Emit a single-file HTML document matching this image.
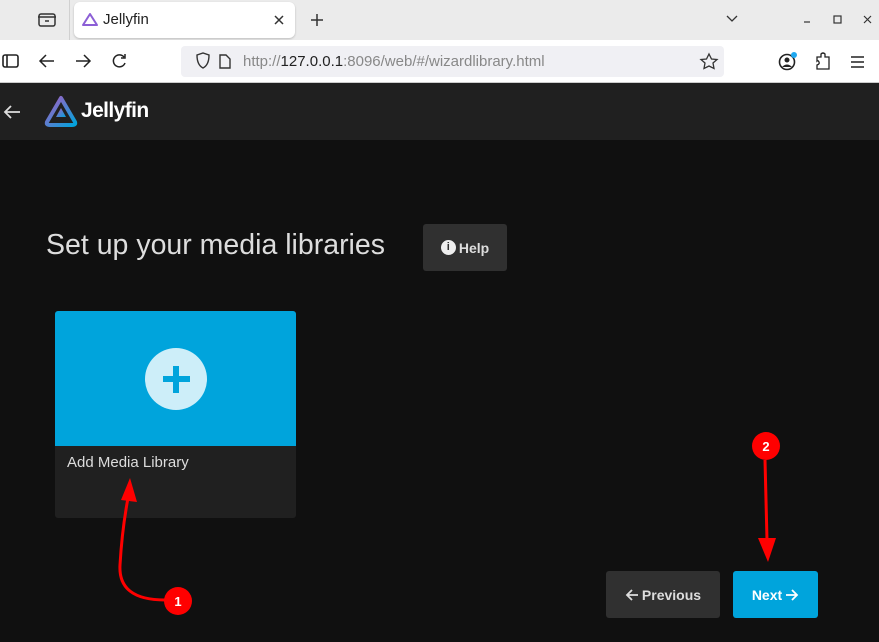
<!DOCTYPE html>
<html><head><style>
*{margin:0;padding:0;box-sizing:border-box}
body{width:879px;height:642px;overflow:hidden;background:#101010;font-family:"Liberation Sans",sans-serif;position:relative}
.abs{position:absolute}
.btn{display:flex;align-items:center;justify-content:center;gap:3px}
</style></head><body>
<div class="abs" style="left:0;top:0;width:879px;height:40px;background:#ebebeb"></div>
<div class="abs" style="left:69px;top:0;width:1px;height:40px;background:#d0d0d0"></div>
<div class="abs" style="left:74px;top:2px;width:221px;height:36px;background:#fff;border-radius:6px;box-shadow:0 1px 2px rgba(0,0,0,.2)"></div>
<svg class="abs" style="left:0;top:0" width="879" height="84">
<rect x="39" y="14" width="16" height="12" rx="2" fill="none" stroke="#333" stroke-width="1.5"/><line x1="38" y1="17" x2="56" y2="17" stroke="#333" stroke-width="1.5"/><line x1="45" y1="21" x2="49" y2="21" stroke="#333" stroke-width="1.5"/>
<path d="M90 14 L97 25 L83 25 Z" fill="none" stroke="#8c5fd6" stroke-width="2" stroke-linejoin="round"/>
<path d="M275 16 L283 24 M283 16 L275 24" stroke="#333" stroke-width="1.5"/>
<path d="M317 14 V26 M311 20 H323" stroke="#333" stroke-width="1.5"/>
<path d="M727 16 L732 21 L737 16" fill="none" stroke="#333" stroke-width="1.3"/>
<line x1="804" y1="22" x2="810" y2="22" stroke="#333" stroke-width="1.2"/>
<rect x="834" y="16" width="7" height="7" fill="none" stroke="#333" stroke-width="1.2"/>
<path d="M864 16 L871 23 M871 16 L864 23" stroke="#333" stroke-width="1.2"/>
<rect x="0" y="40" width="879" height="42" fill="#fff"/>
<rect x="3" y="55" width="15" height="12" rx="2" fill="none" stroke="#222" stroke-width="1.6"/><line x1="7" y1="55" x2="7" y2="67" stroke="#222" stroke-width="1.6"/>
<path d="M54 61 H40 M46 55 L40 61 L46 67" fill="none" stroke="#222" stroke-width="1.5"/>
<path d="M76 61 H90 M84 55 L90 61 L84 67" fill="none" stroke="#222" stroke-width="1.5"/>
<path d="M124 57 A6 6 0 1 0 125 63 M125 54 V58 H121" fill="none" stroke="#222" stroke-width="1.5"/>
<rect x="181" y="46" width="543" height="31" rx="4" fill="#f0f0f4"/>
<path d="M197 55 L203 53 L209 55 Q209 65 203 68 Q197 65 197 55Z" fill="none" stroke="#333" stroke-width="1.4"/>
<path d="M220 55 H226 L230 59 V68 H220Z" fill="none" stroke="#333" stroke-width="1.4"/>
<path d="M709 54 L711.5 59 L717 59.5 L713 63 L714 68.5 L709 66 L704 68.5 L705 63 L701 59.5 L706.5 59Z" fill="none" stroke="#333" stroke-width="1.3"/>
<circle cx="787" cy="62" r="7.5" fill="none" stroke="#222" stroke-width="1.6"/><circle cx="787" cy="60" r="2.5" fill="#222"/><path d="M782 67 Q787 62 792 67" fill="#222"/><circle cx="794" cy="55" r="3" fill="#1fa8f0"/>
<path d="M817 57 H821 V54 Q823 52 825 54 V57 H829 V69 H817 V65 Q820 64 819 62 Q818 60 817 61Z" fill="none" stroke="#222" stroke-width="1.3"/>
<path d="M851 57 H864 M851 62 H864 M851 67 H864" stroke="#222" stroke-width="1.4"/>
<rect x="0" y="82" width="879" height="1" fill="#ccc"/>
</svg>
<div class="abs" style="left:103px;top:11px;font-size:15px;color:#222">Jellyfin</div>
<div class="abs" style="left:243px;top:53px;font-size:15px;color:#888">http://<span style="color:#222">127.0.0.1</span>:8096/web/#/wizardlibrary.html</div>
<div class="abs" style="left:0;top:83px;width:879px;height:57px;background:#202020"></div>
<svg class="abs" style="left:0;top:83px" width="200" height="57">
<path d="M20 29 H5 M11 23 L5 29 L11 35" fill="none" stroke="#ddd" stroke-width="1.8"/>
<defs><linearGradient id="g" x1="0" y1="0" x2="1" y2="1"><stop offset="0" stop-color="#aa5cc3"/><stop offset="1" stop-color="#00a4dc"/></linearGradient></defs>
<path d="M61 15 L75 39 Q76 42 72 42 H50 Q46 42 47 39Z" fill="none" stroke="url(#g)" stroke-width="4" stroke-linejoin="round"/>
<path d="M61 25 L66 34 H56Z" fill="url(#g)"/>
</svg>
<div class="abs" style="left:81px;top:99px;font-size:21px;font-weight:bold;color:#fff;letter-spacing:-0.6px">Jellyfin</div>
<div class="abs" style="left:46px;top:229px;font-size:28.5px;color:#ddd">Set up your media libraries</div>
<div class="abs btn" style="left:423px;top:224px;width:84px;height:47px;background:#303030;border-radius:3px;color:#ddd;font-size:14px;font-weight:bold"><span style="display:inline-block;width:15px;height:15px;border-radius:50%;background:#eee;color:#303030;font-size:11px;text-align:center;line-height:15px">i</span>Help</div>
<div class="abs" style="left:55px;top:311px;width:241px;height:207px;background:#202020;border-radius:3px;overflow:hidden">
<div style="height:135px;background:#00a4dc"></div>
<div style="position:absolute;left:90px;top:37px;width:62px;height:62px;border-radius:50%;background:#cdeef9"></div>
<div style="position:absolute;left:108px;top:65px;width:27px;height:6px;background:#00a4dc"></div>
<div style="position:absolute;left:118px;top:55px;width:6px;height:27px;background:#00a4dc"></div>
<div style="position:absolute;left:12px;top:143px;font-size:15px;color:#ddd">Add Media Library</div>
</div>
<div class="abs btn" style="left:606px;top:571px;width:114px;height:47px;background:#303030;border-radius:3px;color:#ddd;font-size:14px;font-weight:bold"><svg width="14" height="14"><path d="M13 7 H2 M7 2 L2 7 L7 12" fill="none" stroke="#ddd" stroke-width="1.8"/></svg>Previous</div>
<div class="abs btn" style="left:733px;top:571px;width:85px;height:47px;background:#00a4dc;border-radius:3px;color:#fff;font-size:14px;font-weight:bold">Next<svg width="14" height="14"><path d="M1 7 H12 M7 2 L12 7 L7 12" fill="none" stroke="#fff" stroke-width="1.8"/></svg></div>
<svg class="abs" style="left:0;top:0" width="879" height="642">
<path d="M165 600 Q118 600 120 565 Q122 530 128 498" fill="none" stroke="#f00" stroke-width="3"/>
<path d="M130 478 L137 502 L121 500Z" fill="#f00"/>
<path d="M765 460 L767 540" stroke="#f00" stroke-width="3"/>
<path d="M758 538 L768 562 L776 538Z" fill="#f00"/>
<circle cx="178" cy="601" r="14" fill="#f00"/>
<circle cx="766" cy="446" r="14" fill="#f00"/>
<text x="178" y="606" font-size="13" font-weight="bold" fill="#fff" text-anchor="middle" font-family="Liberation Sans">1</text>
<text x="766" y="451" font-size="13" font-weight="bold" fill="#fff" text-anchor="middle" font-family="Liberation Sans">2</text>
</svg>
</body></html>
